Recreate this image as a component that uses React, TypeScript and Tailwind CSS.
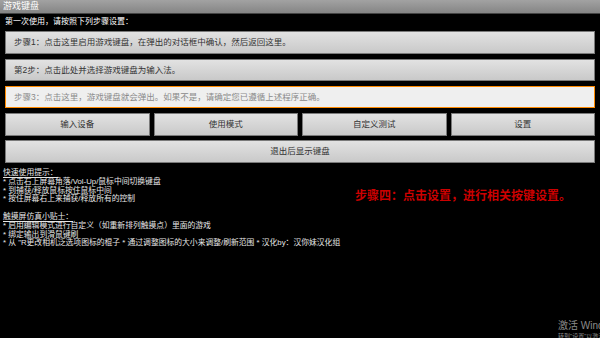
const btn =
  "flex items-center border border-[#7a7a7a] bg-gradient-to-b from-[#e2e2e2] to-[#c9c9c9] text-[#333] text-[8.5px]";

export default function App() {
  return (
    <div
      className="relative w-[600px] h-[338px] bg-black overflow-hidden text-white"
      style={{ fontFamily: '"Liberation Sans", "Noto Sans CJK SC", sans-serif' }}
    >
      {/* TITLE BAR */}
      <div className="h-[14px] bg-gradient-to-b from-[#a2a2a2] to-[#858585] border-b border-[#444] flex items-center px-[3px] text-[9px] leading-none">
        游戏键盘
      </div>

      <div className="px-[5px]">
        <div className="text-[8px] leading-none pt-[4px] h-[17px]">第一次使用，请按照下列步骤设置：</div>

        <div className={`${btn} h-[23px] px-[8px]`}>步骤1：点击这里启用游戏键盘，在弹出的对话框中确认，然后返回这里。</div>
        <div className={`${btn} h-[22px] mt-[5px] px-[8px]`}>第2步：点击此处并选择游戏键盘为输入法。</div>
        <div className="flex items-center h-[22px] mt-[5px] px-[8px] border-[1.5px] border-[#ff8a00] bg-[#efefef] text-[#8a8a8a] text-[8.5px]">
          步骤3：点击这里，游戏键盘就会弹出。如果不是，请确定您已遵循上述程序正确。
        </div>

        <div className="grid grid-cols-4 gap-[4px] mt-[5px]">
          <div className={`${btn} h-[23px] justify-center`}>输入设备</div>
          <div className={`${btn} h-[23px] justify-center`}>使用模式</div>
          <div className={`${btn} h-[23px] justify-center`}>自定义测试</div>
          <div className={`${btn} h-[23px] justify-center`}>设置</div>
        </div>
        <div className={`${btn} h-[23px] mt-[4px] justify-center`}>退出后显示键盘</div>
      </div>

      {/* TIPS */}
      <div className="px-[3px] pt-[6px] text-[7.8px] leading-[8.7px] text-[#e6e6e6]">
        <div>
          <span className="border-b border-[#e6e6e6] leading-[8px] inline-block">快速使用提示：</span>
        </div>
        <div>* 点击右上屏幕角落/Vol-Up/鼠标中间切换键盘</div>
        <div>* 到捕获/释放鼠标按住鼠标中间</div>
        <div>* 按住屏幕右上来捕获/释放所有的控制</div>
        <div className="h-[8.7px]" />
        <div>
          <span className="border-b border-[#e6e6e6] leading-[8px] inline-block">触摸屏仿真小贴士：</span>
        </div>
        <div>* 启用编辑模式进行自定义（如重新排列触摸点）里面的游戏</div>
        <div>* 绑定输出到滑鼠键刷</div>
        <div>* 从 "R更改相机泛选项图标的棍子 * 通过调整图标的大小来调整/刷新范围 * 汉化by：汉你妹汉化组</div>
      </div>

      {/* RED NOTE */}
      <div
        className="absolute left-[355px] top-[189px] text-[12px] font-bold text-[#cc0000] leading-none"
        style={{ fontFamily: '"Noto Sans CJK SC", serif' }}
      >
        步骤四：点击设置，进行相关按键设置。
      </div>

      {/* WATERMARK */}
      <div className="absolute left-[558px] top-[321px] whitespace-nowrap text-[#8a8a8a]">
        <div className="text-[10px] leading-none">激活 Windows</div>
        <div className="text-[6px] leading-none mt-[2px]">转到"设置"以激活 Windows。</div>
      </div>
    </div>
  );
}
